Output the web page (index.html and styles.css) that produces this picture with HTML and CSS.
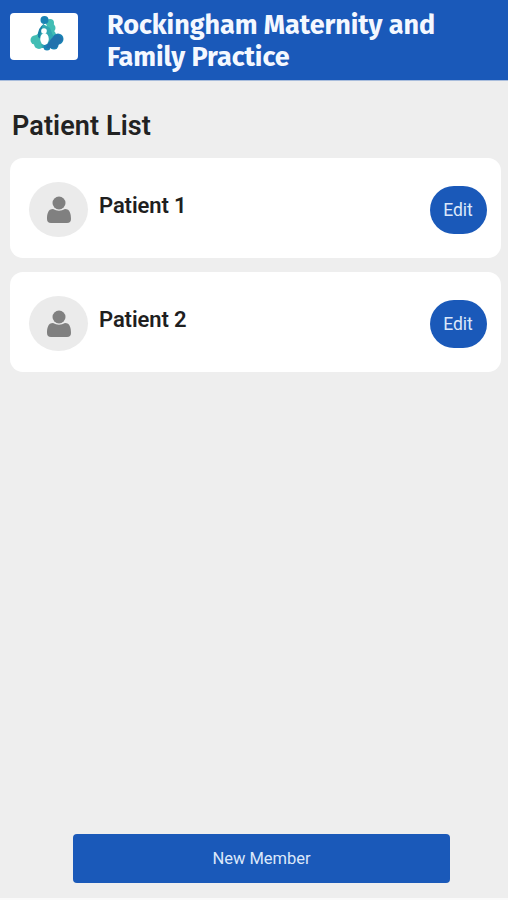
FILE: index.html
```
<!DOCTYPE html>
<html lang="en">
<head>
<meta charset="utf-8">
<title>Patient List</title>
<link rel="stylesheet" href="styles.css">
</head>
<body>
<header class="header">
  <div class="logo">
    <svg width="36" height="36" viewBox="0 0 36 36" aria-hidden="true">
      <g fill="#42bdb4"><circle cx="20" cy="7" r="4"/><circle cx="21" cy="12" r="4.500"/><circle cx="5" cy="24" r="4.500"/><circle cx="9" cy="28" r="5"/><circle cx="21" cy="19" r="5"/></g>
      <path d="M4 20Q9 18 10 14L14 29L7 29Z" fill="#42bdb4"/>
      <path d="M14 8Q7 12 8 21L12 24Z" fill="#1880a5"/>
      <path d="M13 8L20 12L24 22L19 32H12L10 20Z" fill="#31a9b2"/>
      <g fill="#1a83b4"><circle cx="14.500" cy="4" r="4"/><circle cx="28" cy="23" r="5.500"/><circle cx="24" cy="29" r="4.500"/><circle cx="17" cy="31" r="3.500"/></g>
      <path d="M16 32Q20 21 28 18L33 23L26 32Z" fill="#2272ad"/>
      <circle cx="14" cy="15" r="2.800" fill="#fff"/><ellipse cx="14.500" cy="23" rx="4.300" ry="6" fill="#fff"/>
    </svg>
  </div>
  <div class="brand"><span>Rockingham Maternity and</span><span>Family Practice</span></div>
</header>
<main class="main">
  <h1 class="heading">Patient List</h1>
  <ul class="list">
    <li class="card">
      <span class="avatar"><svg width="26" height="28" viewBox="0 0 26 28" aria-hidden="true"><path d="M7 13C2 13 1 18 1 23Q1 27 5 27H21Q25 27 25 23C25 18 24 13 19 13Q13 16.500 7 13Z"/><circle cx="13" cy="7" r="6.500"/></svg></span>
      <span class="name">Patient 1</span>
      <button class="edit">Edit</button>
    </li>
    <li class="card">
      <span class="avatar"><svg width="26" height="28" viewBox="0 0 26 28" aria-hidden="true"><path d="M7 13C2 13 1 18 1 23Q1 27 5 27H21Q25 27 25 23C25 18 24 13 19 13Q13 16.500 7 13Z"/><circle cx="13" cy="7" r="6.500"/></svg></span>
      <span class="name">Patient 2</span>
      <button class="edit">Edit</button>
    </li>
  </ul>
</main>
<footer class="footer"><button class="new-member">New Member</button></footer>
</body>
</html>
```
FILE: styles.css
```
* { box-sizing: border-box; }
body {
  margin: 0;
  height: 900px;
  display: flex;
  flex-direction: column;
  background: #eee;
  border-bottom: 2px solid #fafafa;
  font-family: Roboto, sans-serif;
  overflow: hidden;
}
.header {
  height: 81px;
  flex: none;
  display: flex;
  align-items: flex-start;
  padding: 8px 10px 0;
  background: #1a59b9;
  border-bottom: 1px solid #a9bddc;
}
.logo {
  width: 68px;
  height: 47px;
  margin: 5px 29px 0 0;
  padding: 3px 0 0 20px;
  background: #fff;
  border-radius: 4px;
}
.logo svg { display: block; }
.brand {
  padding-top: 1px;
  font: 700 27px/32px "Fira Sans", "Noto Sans", sans-serif;
  letter-spacing: -0.06px;
  color: #f4f8ff;
  white-space: nowrap;
}
.brand span { display: block; }
.main { flex: 1; padding: 27px 7px 0 10px; }
.heading {
  margin: 0 0 15px 2px;
  padding-top: 1px;
  font-size: 27px;
  line-height: 34px;
  font-weight: 600;
  letter-spacing: 0.1px;
  color: #222;
}
.list {
  margin: 0;
  padding: 0;
  list-style: none;
  display: grid;
  gap: 14px;
}
.card {
  height: 100px;
  display: flex;
  align-items: center;
  padding: 3px 14px 0 19px;
  background: #fff;
  border-radius: 13px;
}
.avatar {
  width: 59px;
  height: 55px;
  display: grid;
  place-items: center;
  background: #ebebeb;
  border-radius: 50%;
}
.avatar svg { fill: #808080; }
.name {
  flex: 1;
  margin: 0 0 9px 11px;
  font-size: 22px;
  font-weight: 600;
  letter-spacing: -0.1px;
  color: #1f1f1f;
}
button {
  border: 0;
  padding: 0;
  font-family: inherit;
  color: #dce8fa;
  background: #1a59b9;
}
.edit {
  width: 57px;
  height: 48px;
  margin-top: 1px;
  padding: 0 1px 1px 0;
  border-radius: 24px;
  font-size: 17.500px;
}
.footer {
  flex: none;
  height: 64px;
  padding-left: 73px;
}
.new-member {
  width: 377px;
  height: 49px;
  padding-bottom: 1px;
  border-radius: 4px;
  font-size: 16.500px;
}
```
